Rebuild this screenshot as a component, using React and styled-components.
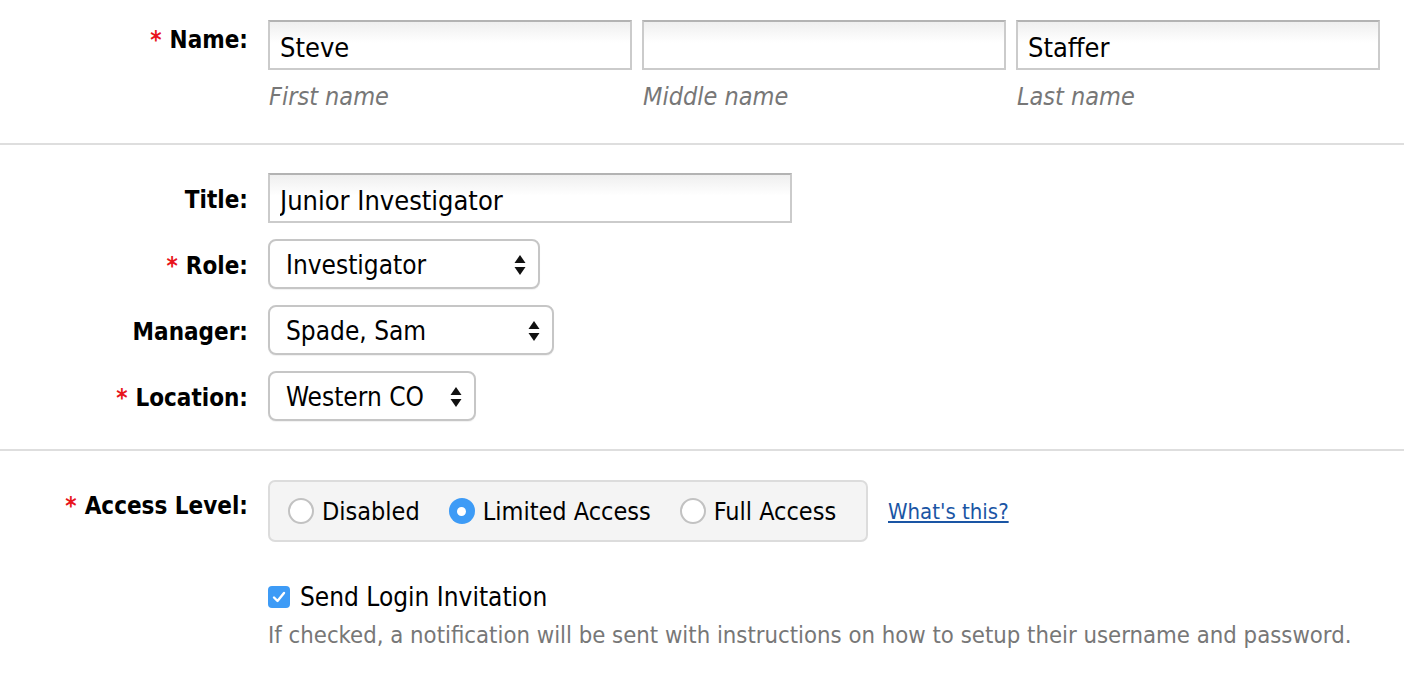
import React, { useState } from "react";
import styled, { createGlobalStyle } from "styled-components";

const GlobalStyle = createGlobalStyle`
  html, body {
    margin: 0;
    padding: 0;
    background: #fff;
  }
  body {
    font-family: "DejaVu Sans Condensed", "DejaVu Sans", Tahoma, sans-serif;
    color: #000;
  }
`;

const Form = styled.form`
  width: 1404px;
`;

const Section = styled.section`
  padding: ${(p) => p.$pad || "20px 0 29px"};
  border-bottom: ${(p) => (p.$last ? "none" : "2px solid #dedede")};
  display: flex;
  flex-direction: column;
  gap: 16px;
`;

const Row = styled.div`
  display: grid;
  grid-template-columns: 248px 1fr;
  column-gap: 20px;
  align-items: ${(p) => (p.$top ? "start" : "center")};
`;

const Label = styled.label`
  text-align: right;
  font-weight: bold;
  font-size: 24px;
  padding-top: ${(p) => p.$offset || "4px"};
  align-self: ${(p) => (p.$top ? "start" : "center")};
  white-space: nowrap;
`;

const Req = styled.span`
  color: #e8141b;
  margin-right: 8px;
`;

const NameGrid = styled.div`
  display: grid;
  grid-template-columns: repeat(3, 364px);
  column-gap: 10px;
`;

const NamePart = styled.div`
  display: flex;
  flex-direction: column;
  gap: 12px;
`;

const TextInput = styled.input`
  box-sizing: border-box;
  width: ${(p) => p.$width || "100%"};
  height: 50px;
  border: 2px solid #cbcbcb;
  border-top-color: #b3b3b3;
  background: linear-gradient(#efefef, #fff 45%);
  font-family: inherit;
  font-size: 27px;
  color: #000;
  padding: 4px 10px 0;
  outline: none;
`;

const Hint = styled.span`
  font-style: italic;
  color: #777;
  font-size: 25px;
  padding-left: 1px;
`;

const SelectBox = styled.div`
  box-sizing: border-box;
  width: ${(p) => p.$width};
  height: 50px;
  border: 2px solid #c6c6c6;
  border-radius: 8px;
  background: #fff;
  box-shadow: 0 1px 1px rgba(0, 0, 0, 0.06);
  display: flex;
  align-items: center;
  justify-content: space-between;
  padding: 2px 12px 0 16px;
  font-size: 26px;
`;

const Arrows = () => (
  <svg width="12" height="22" viewBox="0 0 12 22">
    <path d="M6 1 L11.5 9 H0.5 Z" fill="#111" />
    <path d="M6 21 L11.5 13 H0.5 Z" fill="#111" />
  </svg>
);

const Select = ({ value, width }) => (
  <SelectBox $width={width}>
    <span>{value}</span>
    <Arrows />
  </SelectBox>
);

const AccessWrap = styled.div`
  display: flex;
  align-items: center;
  gap: 20px;
`;

const RadioGroup = styled.div`
  box-sizing: border-box;
  width: 600px;
  height: 62px;
  background: #f4f4f4;
  border: 2px solid #dcdcdc;
  border-radius: 7px;
  display: flex;
  align-items: center;
  padding: 0 18px;
  gap: 29px;
`;

const RadioOption = styled.label`
  display: flex;
  align-items: center;
  gap: 8px;
  font-size: 25px;
  white-space: nowrap;
  cursor: pointer;
`;

const Dot = styled.span`
  box-sizing: border-box;
  flex: none;
  width: 26px;
  height: 26px;
  border-radius: 50%;
  border: ${(p) => (p.$on ? "none" : "2px solid #c2c2c2")};
  background: ${(p) => (p.$on ? "#3d9bf6" : "#fff")};
  display: flex;
  align-items: center;
  justify-content: center;
  &::after {
    content: "";
    display: ${(p) => (p.$on ? "block" : "none")};
    width: 9px;
    height: 9px;
    border-radius: 50%;
    background: #fff;
  }
`;

const HelpLink = styled.a`
  color: #1a55a4;
  font-size: 22px;
  text-decoration: underline;
`;

const CheckArea = styled.div`
  padding-top: 24px;
`;

const CheckRow = styled.label`
  display: flex;
  align-items: center;
  gap: 10px;
  font-size: 26px;
`;

const CheckBox = styled.span`
  width: 22px;
  height: 22px;
  border-radius: 4px;
  background: #3d9bf6;
  display: flex;
  align-items: center;
  justify-content: center;
`;

const Note = styled.p`
  margin: 9px 0 0;
  color: #777;
  font-size: 23.7px;
  white-space: nowrap;
`;

const levels = ["Disabled", "Limited Access", "Full Access"];

export default function App() {
  const [level, setLevel] = useState("Limited Access");

  return (
    <>
      <GlobalStyle />
      <Form>
        <Section $pad="20px 0 32px">
          <Row $top>
            <Label $top $offset="6px">
              <Req>*</Req>Name:
            </Label>
            <NameGrid>
              <NamePart>
                <TextInput defaultValue="Steve" />
                <Hint>First name</Hint>
              </NamePart>
              <NamePart>
                <TextInput defaultValue="" />
                <Hint>Middle name</Hint>
              </NamePart>
              <NamePart>
                <TextInput defaultValue="Staffer" />
                <Hint>Last name</Hint>
              </NamePart>
            </NameGrid>
          </Row>
        </Section>

        <Section $pad="28px 0 28px">
          <Row>
            <Label>Title:</Label>
            <TextInput $width="524px" defaultValue="Junior Investigator" />
          </Row>
          <Row>
            <Label>
              <Req>*</Req>Role:
            </Label>
            <Select value="Investigator" width="272px" />
          </Row>
          <Row>
            <Label>Manager:</Label>
            <Select value="Spade, Sam" width="286px" />
          </Row>
          <Row>
            <Label>
              <Req>*</Req>Location:
            </Label>
            <Select value="Western CO" width="208px" />
          </Row>
        </Section>

        <Section $pad="29px 0 0" $last>
          <Row $top>
            <Label $top $offset="12px">
              <Req>*</Req>Access Level:
            </Label>
            <AccessWrap>
              <RadioGroup>
                {levels.map((l) => (
                  <RadioOption key={l} onClick={() => setLevel(l)}>
                    <Dot $on={level === l} />
                    {l}
                  </RadioOption>
                ))}
              </RadioGroup>
              <HelpLink href="#">What's this?</HelpLink>
            </AccessWrap>
          </Row>
          <Row>
            <span />
            <CheckArea>
              <CheckRow>
                <CheckBox>
                  <svg width="14" height="12" viewBox="0 0 14 12">
                    <path
                      d="M2 6.5 L5.5 10 L12 2"
                      stroke="#fff"
                      strokeWidth="2.4"
                      fill="none"
                      strokeLinecap="round"
                      strokeLinejoin="round"
                    />
                  </svg>
                </CheckBox>
                Send Login Invitation
              </CheckRow>
              <Note>
                If checked, a notification will be sent with instructions on
                how to setup their username and password.
              </Note>
            </CheckArea>
          </Row>
        </Section>
      </Form>
    </>
  );
}
